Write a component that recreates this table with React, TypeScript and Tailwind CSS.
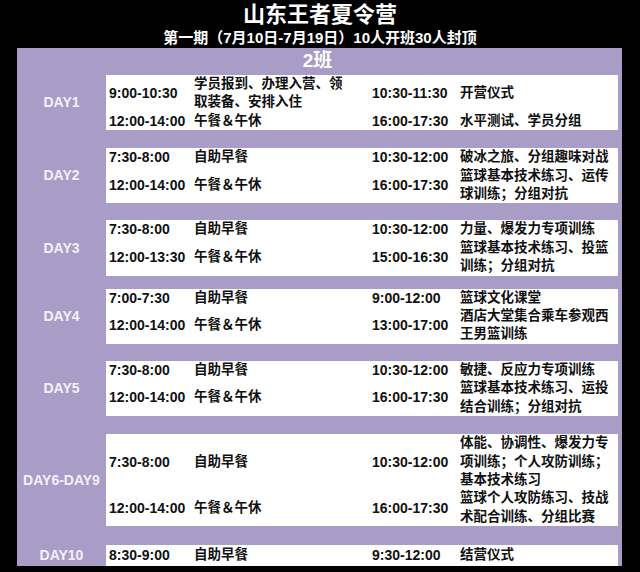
import React from 'react';

type Row = {
    t1: string;
    d1: string[];
    t2: string;
    d2: string[];
};

type Day = {
    label: string;
    gap: string;
    rows: Row[];
};

const days: Day[] = [
    {
        label: 'DAY1',
        gap: 'mt-0',
        rows: [
            { t1: '9:00-10:30', d1: ['学员报到、办理入营、领', '取装备、安排入住'], t2: '10:30-11:30', d2: ['开营仪式'] },
            { t1: '12:00-14:00', d1: ['午餐＆午休'], t2: '16:00-17:30', d2: ['水平测试、学员分组'] },
        ],
    },
    {
        label: 'DAY2',
        gap: 'mt-[18px]',
        rows: [
            { t1: '7:30-8:00', d1: ['自助早餐'], t2: '10:30-12:00', d2: ['破冰之旅、分组趣味对战'] },
            { t1: '12:00-14:00', d1: ['午餐＆午休'], t2: '16:00-17:30', d2: ['篮球基本技术练习、运传', '球训练；分组对抗'] },
        ],
    },
    {
        label: 'DAY3',
        gap: 'mt-[17px]',
        rows: [
            { t1: '7:30-8:00', d1: ['自助早餐'], t2: '10:30-12:00', d2: ['力量、爆发力专项训练'] },
            { t1: '12:00-13:30', d1: ['午餐＆午休'], t2: '15:00-16:30', d2: ['篮球基本技术练习、投篮', '训练；分组对抗'] },
        ],
    },
    {
        label: 'DAY4',
        gap: 'mt-[13px]',
        rows: [
            { t1: '7:00-7:30', d1: ['自助早餐'], t2: '9:00-12:00', d2: ['篮球文化课堂'] },
            { t1: '12:00-14:00', d1: ['午餐＆午休'], t2: '13:00-17:00', d2: ['酒店大堂集合乘车参观西', '王男篮训练'] },
        ],
    },
    {
        label: 'DAY5',
        gap: 'mt-[17px]',
        rows: [
            { t1: '7:30-8:00', d1: ['自助早餐'], t2: '10:30-12:00', d2: ['敏捷、反应力专项训练'] },
            { t1: '12:00-14:00', d1: ['午餐＆午休'], t2: '16:00-17:30', d2: ['篮球基本技术练习、运投', '结合训练；分组对抗'] },
        ],
    },
    {
        label: 'DAY6-DAY9',
        gap: 'mt-[18px]',
        rows: [
            { t1: '7:30-8:00', d1: ['自助早餐'], t2: '10:30-12:00', d2: ['体能、协调性、爆发力专', '项训练；个人攻防训练；', '基本技术练习'] },
            { t1: '12:00-14:00', d1: ['午餐＆午休'], t2: '16:00-17:30', d2: ['篮球个人攻防练习、技战', '术配合训练、分组比赛'] },
        ],
    },
    {
        label: 'DAY10',
        gap: 'mt-[19px]',
        rows: [
            { t1: '8:30-9:00', d1: ['自助早餐'], t2: '9:30-12:00', d2: ['结营仪式'] },
        ],
    },
];

const Lines = ({ lines }: { lines: string[] }) => (
    <div className="self-center whitespace-nowrap text-[13.5px]">
        {lines.map((l, i) => (
            <div key={i}>{l}</div>
        ))}
    </div>
);

const DayBlock = ({ day }: { day: Day }) => (
    <div className={`flex ${day.gap}`}>
        <div className="w-[89px] flex items-center justify-center text-[14px] font-bold text-[#f3f0f8]">
            {day.label}
        </div>
        <div className="w-[512px] bg-white pl-[3px] grid grid-cols-[85px_178px_88px_1fr] leading-[18.4px] font-bold text-[#111]">
            {day.rows.map((r, i) => (
                <React.Fragment key={i}>
                    <div className="self-center text-[14px] whitespace-nowrap">{r.t1}</div>
                    <Lines lines={r.d1} />
                    <div className="self-center text-[14px] whitespace-nowrap">{r.t2}</div>
                    <Lines lines={r.d2} />
                </React.Fragment>
            ))}
        </div>
    </div>
);

export default function App() {
    return (
        <div
            className="w-[640px] h-[572px] bg-black overflow-hidden pt-[2px]"
            style={{ fontFamily: '"Liberation Sans", "Noto Sans CJK SC", sans-serif' }}
        >
            <h1 className="text-center text-white font-bold text-[22px] leading-[26px]">山东王者夏令营</h1>
            <p className="text-center text-white font-bold text-[15px] leading-[20px]">
                第一期（7月10日-7月19日）10人开班30人封顶
            </p>
            <div className="ml-[17px] w-[605px] bg-[#a99dc8] pr-[4px]">
                <div className="h-[27px] flex items-center justify-center text-white font-bold text-[19px]">2班</div>
                {days.map((d) => (
                    <DayBlock key={d.label} day={d} />
                ))}
            </div>
        </div>
    );
}
